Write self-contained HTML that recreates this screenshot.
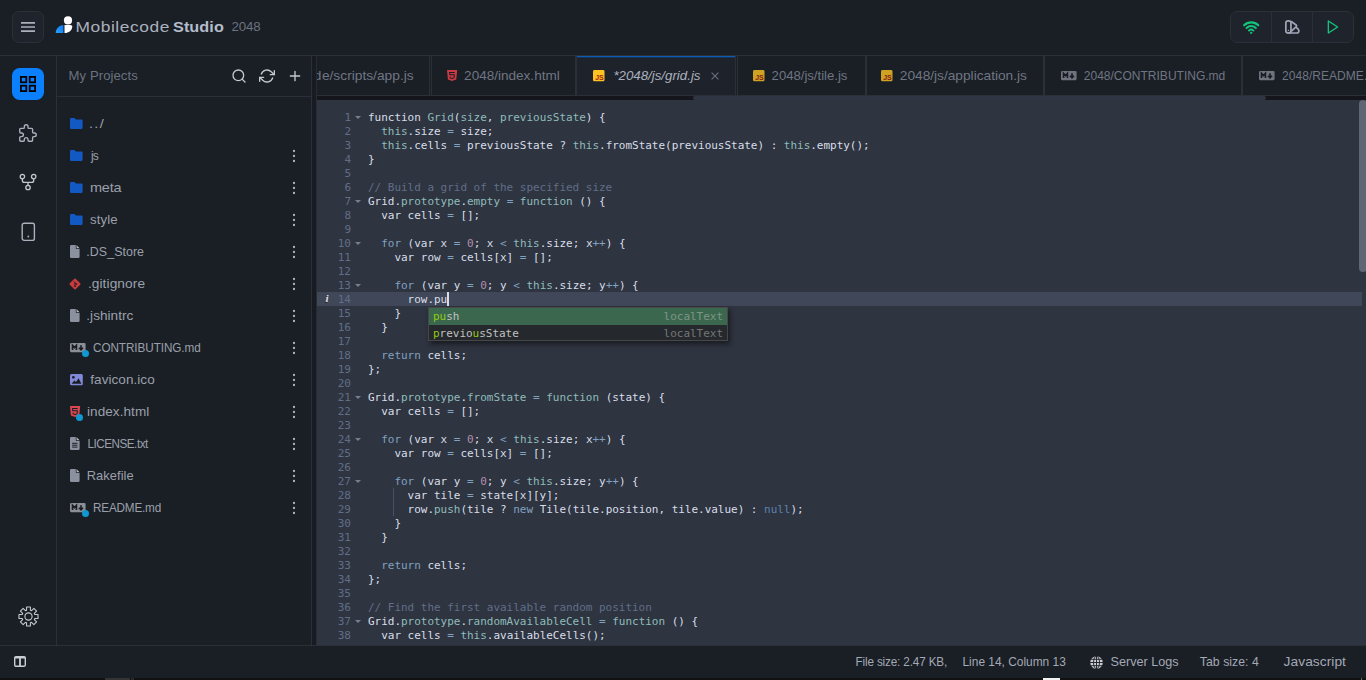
<!DOCTYPE html>
<html lang="en"><head><meta charset="utf-8"><title>Mobilecode Studio</title>
<style>
*{box-sizing:border-box;margin:0;padding:0}
html,body{width:1366px;height:680px;overflow:hidden;background:#1a1e25}
body{position:relative;font-family:"Liberation Sans",sans-serif;font-size:13px;color:#9ca3af}
.abs,.ic,.tx,.tt,.dot{position:absolute}
#hdr span,#mp,.tx,.tt,#st span{transform-origin:0 0}
#tb0p{transform-origin:100% 0;transform:scaleX(1.05)}
.ic{display:block;overflow:visible}
.fe{fill:none;stroke:#c3c8d2;stroke-width:2;stroke-linecap:round;stroke-linejoin:round}
#hdr{left:0;top:0;width:1366px;height:56px;border-bottom:1px solid #2b2f38}
#menu{left:12px;top:11px;width:32px;height:32px;border:1px solid #2b2f38;border-radius:7px;background:#1f232b}
#h1,#h2{top:14.800px;font-size:15.500px;line-height:24px;color:#aab1be;white-space:nowrap}
#h2{font-weight:bold;color:#b4bccb}
#h3{top:17px;font-size:13px;line-height:20px;color:#6b7280}
#grp{left:1230px;top:11px;width:124px;height:32px;border:1px solid #2b2f38;border-radius:7px;background:#1f232b}
#grp i{position:absolute;top:0;width:1px;height:30px;background:#2b2f38}
#rail{left:0;top:56px;width:57px;height:589px;border-right:1px solid #2b2f38}
#act{left:12px;top:12px;width:32px;height:32px;border-radius:8px;background:#0a80ff}
#side{left:57px;top:56px;width:255px;height:589px;border-right:1px solid #2b2f38}
#sh{left:0;top:0;width:254px;height:41px;border-bottom:1px solid #2b2f38}
#mp{left:12px;top:10px;line-height:20px;color:#6b7280;white-space:nowrap}
.tx{line-height:20px;white-space:nowrap;color:#9aa0ab}
.dot{width:7px;height:7px;border-radius:50%;background:#1198d2}
#split{left:312px;top:56px;width:5px;height:589px;background:#181b21;border-right:1px solid #272b34}
#tabs{left:317px;top:56px;width:1049px;height:40px;overflow:hidden;border-bottom:1px solid #2b2f38}
.tab{position:absolute;top:0;height:39px;border-left:1px solid #2b2f38;border-right:1px solid #2b2f38}
.tab.on{background:linear-gradient(#0d5cb6,#0d5cb6 1px,rgba(13,92,182,.35) 1px,rgba(13,92,182,.35) 2px,#1e222a 2px)}
.tt{top:10px;line-height:20px;white-space:nowrap;color:#6f7683}
.tab.on .tt{font-style:italic;color:#aab1be}
#tsb{left:317px;top:96px;width:1049px;height:4px;background:#14161b}
#tsb i{position:absolute;left:376px;top:0;width:573px;height:4px;border-radius:2px;background:#2f3542}
#ed{left:317px;top:100px;width:1049px;height:545px;background:#2e3440;overflow:hidden;font-family:"DejaVu Sans Mono","Liberation Mono",monospace;font-size:11px;color:#d8dee9}
.ln{position:absolute;left:0;width:1045px;height:14px;line-height:14px;white-space:pre}
.ln.act{background:#3f4758}
.num{position:absolute;top:1px;left:0;width:34px;text-align:right;color:#616e88}
.src{position:absolute;top:1px;left:51px;letter-spacing:-0.0226px}
.src b{font-weight:normal}
.t{color:#8fbcbb}.k{color:#81a1c1}.n{color:#b48ead}.c{color:#616e88}.l{color:#5e81ac}
.fold{position:absolute;left:37.600px;top:5.500px;width:0;height:0;border-left:3px solid transparent;border-right:3px solid transparent;border-top:3.200px solid #767e8e}
.info{position:absolute;left:8.500px;top:-1px;font-family:"Liberation Serif",serif;font-style:italic;font-weight:bold;font-size:11px;color:#e4e6ea;text-shadow:-.5px .5px 0 #222}
#guide{left:76px;top:388px;width:1px;height:28px;background:#475063}
#cur{left:130.400px;top:192px;width:1.500px;height:14px;background:#d8dee9}
#pop{left:111px;top:207px;width:300px;height:34px;border:1px solid #484747;background:#25282c;box-shadow:2px 3px 5px rgba(0,0,0,.51);color:#c1c1c1}
#pop div{position:relative;height:17px;line-height:17px;padding:0 4px;white-space:pre;letter-spacing:-0.0226px}
#pop div+div{height:15px;line-height:17px;padding-top:0}
#pop div.sel{background:#3a674e}
#pop em{font-style:normal;color:#93ca12}
#pop span{position:absolute;right:4px;top:0;opacity:.5}
#vsb{left:1042px;top:0;width:8px;height:172px;border-radius:4px;background:#5f6574}
#st{left:0;top:645px;width:1366px;height:33px;border-top:1px solid #2b2f38}
#st span{position:absolute;top:6px;line-height:20px;white-space:nowrap;color:#a3a9b5}
#blk{left:0;top:678px;width:1366px;height:2px;background:#111}
#h1{transform:translateX(-0.6px) scaleX(1.12);letter-spacing:0.52px}
#h2{transform:translateX(0px) scaleX(1.0479);letter-spacing:0.057px}
#h3{transform:translateX(-0.4px) scaleX(1.0214);letter-spacing:-0.131px}
#mp{transform:translateX(-0.4px) scaleX(1.009);letter-spacing:0.059px}
#s1{transform:translateX(-0.5px) scaleX(0.9);letter-spacing:-0.16px}
#s2{transform:translateX(-0.5px) scaleX(0.9179);letter-spacing:-0.013px}
#s3{transform:translateX(-0.4px) scaleX(0.97);letter-spacing:-0.01px}
#s4{transform:translateX(-0.2px) scaleX(0.9429);letter-spacing:0.042px}
#s5{transform:translateX(-0.4px) scaleX(1.0576);letter-spacing:0.042px}
#t0{transform:translateX(-1px) scaleX(1.12);letter-spacing:1.161px}
#t1{transform:translateX(1px) scaleX(0.92);letter-spacing:-0.87px}
#t2{transform:translateX(0px) scaleX(1.1138);letter-spacing:-0.209px}
#t3{transform:translateX(0px) scaleX(1.0148);letter-spacing:0.099px}
#t4{transform:translateX(-0.7px) scaleX(0.9559);letter-spacing:0.052px}
#t5{transform:translateX(-0.1px) scaleX(1.0528);letter-spacing:0.084px}
#t6{transform:translateX(-0.7px) scaleX(1.0477);letter-spacing:0.012px}
#t7{transform:translateX(0px) scaleX(0.9);letter-spacing:-0.063px}
#t8{transform:translateX(0.3px) scaleX(1.0403);letter-spacing:0.048px}
#t9{transform:translateX(0px) scaleX(1.0424);letter-spacing:0.053px}
#t10{transform:translateX(0.4px) scaleX(0.9);letter-spacing:-0.533px}
#t11{transform:translateX(-0.3px) scaleX(0.9891);letter-spacing:0.072px}
#t12{transform:translateX(0px) scaleX(0.9);letter-spacing:-0.195px}
#tb0{transform:translateX(-0.1px) scaleX(1.0581);letter-spacing:0.0px}
#tb1{transform:translateX(0.1px) scaleX(1.0429);letter-spacing:-0.007px}
#tb2{transform:translateX(0.4px) scaleX(1.0224);letter-spacing:-0.007px}
#tb3{transform:translateX(-0.4px) scaleX(1.0107);letter-spacing:-0.014px}
#tb4{transform:translateX(-0.2px) scaleX(1.0558);letter-spacing:-0.014px}
#tb5{transform:translateX(-0.2px) scaleX(0.9257);letter-spacing:-0.017px}
#tb6{transform:translateX(0px) scaleX(0.9236);letter-spacing:0.05px}
</style></head>
<body>
<div id="hdr" class="abs">
 <div id="menu" class="abs"><svg class="ic" style="left:8px;top:8.900px" width="14" height="12" viewBox="0 0 14 12"><path d="M0 1.800h14M0 6h14M0 10.200h14" stroke="#aab0bc" stroke-width="1.700"/></svg></div>
 <svg class="ic" style="left:55px;top:16px" width="18" height="18" viewBox="55 16 18 18"><defs><linearGradient id="lg" x1="0" y1="1" x2="1" y2="0"><stop offset="0" stop-color="#2aa2ff"/><stop offset="1" stop-color="#0a78f2"/></linearGradient></defs><circle cx="68" cy="20.400" r="4.100" fill="#fff"/><path d="M64.500 24.900H70.600Q72.250 24.900 72.250 26.600C72.250 30.600 68.800 33.100 64.500 33.100z" fill="#fff"/><path d="M63.350 24.900V33.100H55.700C55.700 28.600 59.100 24.900 63.350 24.900z" fill="url(#lg)"/></svg>
 <span id="h1" class="abs" style="left:76.400px">Mobilecode</span><span id="h2" class="abs" style="left:173px">Studio</span><span id="h3" class="abs" style="left:231.600px">2048</span>
 <div id="grp" class="abs"><i style="left:40px"></i><i style="left:81px"></i>
  <svg class="ic" style="left:11.800px;top:9px" width="16.400" height="13" preserveAspectRatio="none" viewBox="0 0 18 14"><g fill="none" stroke="#14c47d" stroke-linecap="round"><path d="M1.200 4.700a11 11 0 0 1 15.600 0" stroke-width="2.300"/><path d="M3.900 7.600a7.200 7.200 0 0 1 10.200 0" stroke-width="2.200"/><path d="M6.500 10.300a3.600 3.600 0 0 1 5 0" stroke-width="2"/></g><circle cx="9" cy="12.700" r="1.250" fill="#14c47d"/></svg>
  <svg class="ic" style="left:53px;top:7px" width="16" height="16" viewBox="1284 19 16 16"><g fill="none" stroke="#a0a6b8" stroke-width="1.700" stroke-linejoin="round" stroke-linecap="round"><rect x="1285.850" y="20.800" width="5.100" height="12.200" rx="2.300"/><path d="M1291.700 21.700L1296.100 25Q1297 25.800 1296.200 26.600L1291.700 30.900"/><path d="M1296.600 27.700Q1298.900 29 1298.900 31Q1298.800 33 1296.800 33L1288.400 33"/></g><circle cx="1288.400" cy="30.400" r=".7" fill="#a0a6b8"/></svg>
  <svg class="ic" style="left:94px;top:7px" width="16" height="16" viewBox="0 0 24 24"><path d="M5 3l14 9-14 9z" fill="none" stroke="#14c47d" stroke-width="2" stroke-linejoin="round"/></svg>
 </div>
</div>
<div id="rail" class="abs">
 <div id="act" class="abs"><svg class="ic" style="left:8px;top:8px" width="16" height="16" viewBox="0 0 16 16"><g fill="none" stroke="#000" stroke-width="1.800"><rect x=".9" y=".9" width="5.400" height="5.400"/><rect x="9.700" y=".9" width="5.400" height="5.400"/><rect x=".9" y="9.700" width="5.400" height="5.400"/><rect x="9.700" y="9.700" width="5.400" height="5.400"/></g></svg></div>
 <svg class="ic" style="left:17px;top:66px" width="22" height="22" viewBox="0 0 24 24"><path d="M4 7h3a1 1 0 0 0 1-1V5a2 2 0 0 1 4 0v1a1 1 0 0 0 1 1h3a1 1 0 0 1 1 1v3a1 1 0 0 0 1 1h1a2 2 0 0 1 0 4h-1a1 1 0 0 0-1 1v3a1 1 0 0 1-1 1h-3a1 1 0 0 1-1-1v-1a2 2 0 0 0-4 0v1a1 1 0 0 1-1 1H4a1 1 0 0 1-1-1v-3a1 1 0 0 1 1-1h1a2 2 0 0 0 0-4H4a1 1 0 0 1-1-1V8a1 1 0 0 1 1-1" fill="none" stroke="#aab0bd" stroke-width="1.500" stroke-linejoin="round"/></svg>
 <svg class="ic" style="left:19px;top:117px" width="18" height="18" viewBox="0 0 18 18"><g fill="none" stroke="#c3c8d2" stroke-width="1.300"><circle cx="3.400" cy="3.600" r="2.200"/><circle cx="14.700" cy="3.600" r="2.200"/><circle cx="9" cy="14.500" r="2.200"/><path d="M3.400 5.800v1.600a2 2 0 0 0 2 2h7.300a2 2 0 0 0 2-2V5.800M9 9.400v2.900"/></g></svg>
 <svg class="ic" style="left:21px;top:165.500px" width="15" height="20" viewBox="0 0 15 20"><rect x="1.200" y="1.200" width="12.200" height="17.200" rx="2" fill="none" stroke="#aab0bd" stroke-width="1.400"/><circle cx="7.300" cy="14.500" r=".9" fill="#aab0bd"/></svg>
 <svg class="ic" style="left:17.800px;top:549.500px" width="21" height="21" viewBox="-10.500 -10.500 21 21"><g fill="none" stroke="#c3c8d2" stroke-width="1.100" stroke-linejoin="round"><path d="M-1.95 -6.31 L-1.93 -9.51 L1.93 -9.51 L1.95 -6.31 L3.08 -5.84 L5.36 -8.08 L8.08 -5.36 L5.84 -3.08 L6.31 -1.95 L9.51 -1.93 L9.51 1.93 L6.31 1.95 L5.84 3.08 L8.08 5.36 L5.36 8.08 L3.08 5.84 L1.95 6.31 L1.93 9.51 L-1.93 9.51 L-1.95 6.31 L-3.08 5.84 L-5.36 8.08 L-8.08 5.36 L-5.84 3.08 L-6.31 1.95 L-9.51 1.93 L-9.51 -1.93 L-6.31 -1.95 L-5.84 -3.08 L-8.08 -5.36 L-5.36 -8.08 L-3.08 -5.84Z"/><circle r="3.600"/></g></svg>
</div>
<div id="side" class="abs">
 <div id="sh" class="abs"><span id="mp" class="abs">My Projects</span>
  <svg class="ic fe" style="left:174px;top:12px" width="16" height="16" viewBox="0 0 24 24"><circle cx="11" cy="11" r="8"/><path d="M21 21l-4.350-4.350"/></svg>
  <svg class="ic fe" style="left:202px;top:12px" width="16" height="16" viewBox="0 0 24 24"><path d="M23 4v6h-6M1 20v-6h6"/><path d="M3.510 9a9 9 0 0 1 14.850-3.360L23 10M1 14l4.640 4.360A9 9 0 0 0 20.490 15"/></svg>
  <svg class="ic fe" style="left:230px;top:12px" width="16" height="16" viewBox="0 0 24 24"><path d="M12 5v14M5 12h14"/></svg>
 </div>
<div class="row"><svg class="ic" style="left:12.5px;top:61.5px" width="12.600" height="11" preserveAspectRatio="none" viewBox="0 0 13 11"><path d="M1.2 0h3.6l1.4 1.5h5.6A1.2 1.2 0 0 1 13 2.7v7.1A1.2 1.2 0 0 1 11.8 11H1.2A1.2 1.2 0 0 1 0 9.8V1.2A1.2 1.2 0 0 1 1.2 0z" fill="#1259c3"/></svg><span id="t0" class="tx" style="left:33px;top:58px">../</span></div>
<div class="row"><svg class="ic" style="left:12.5px;top:93.5px" width="12.600" height="11" preserveAspectRatio="none" viewBox="0 0 13 11"><path d="M1.2 0h3.6l1.4 1.5h5.6A1.2 1.2 0 0 1 13 2.7v7.1A1.2 1.2 0 0 1 11.8 11H1.2A1.2 1.2 0 0 1 0 9.8V1.2A1.2 1.2 0 0 1 1.2 0z" fill="#1259c3"/></svg><span id="t1" class="tx" style="left:33px;top:90px">js</span><svg class="ic" style="left:235px;top:93px" width="4" height="14" viewBox="0 0 4 14"><circle cx="2" cy="2" r="1.150" fill="#aeb3bf"/><circle cx="2" cy="7" r="1.150" fill="#aeb3bf"/><circle cx="2" cy="12" r="1.150" fill="#aeb3bf"/></svg></div>
<div class="row"><svg class="ic" style="left:12.5px;top:125.5px" width="12.600" height="11" preserveAspectRatio="none" viewBox="0 0 13 11"><path d="M1.2 0h3.6l1.4 1.5h5.6A1.2 1.2 0 0 1 13 2.7v7.1A1.2 1.2 0 0 1 11.8 11H1.2A1.2 1.2 0 0 1 0 9.8V1.2A1.2 1.2 0 0 1 1.2 0z" fill="#1259c3"/></svg><span id="t2" class="tx" style="left:33px;top:122px">meta</span><svg class="ic" style="left:235px;top:125px" width="4" height="14" viewBox="0 0 4 14"><circle cx="2" cy="2" r="1.150" fill="#aeb3bf"/><circle cx="2" cy="7" r="1.150" fill="#aeb3bf"/><circle cx="2" cy="12" r="1.150" fill="#aeb3bf"/></svg></div>
<div class="row"><svg class="ic" style="left:12.5px;top:157.5px" width="12.600" height="11" preserveAspectRatio="none" viewBox="0 0 13 11"><path d="M1.2 0h3.6l1.4 1.5h5.6A1.2 1.2 0 0 1 13 2.7v7.1A1.2 1.2 0 0 1 11.8 11H1.2A1.2 1.2 0 0 1 0 9.8V1.2A1.2 1.2 0 0 1 1.2 0z" fill="#1259c3"/></svg><span id="t3" class="tx" style="left:33px;top:154px">style</span><svg class="ic" style="left:235px;top:157px" width="4" height="14" viewBox="0 0 4 14"><circle cx="2" cy="2" r="1.150" fill="#aeb3bf"/><circle cx="2" cy="7" r="1.150" fill="#aeb3bf"/><circle cx="2" cy="12" r="1.150" fill="#aeb3bf"/></svg></div>
<div class="row"><svg class="ic" style="left:12.5px;top:188.8px" width="9.600" height="13" preserveAspectRatio="none" viewBox="0 0 10 13"><path d="M1.3 0H6v3a1 1 0 0 0 1 1h3v7.7A1.3 1.3 0 0 1 8.7 13H1.3A1.3 1.3 0 0 1 0 11.700V1.3A1.300 1.3 0 0 1 1.300 0z" fill="#8b919e"/><path d="M6.800 0l3.200 3.200H7.300a.5.5 0 0 1-.5-.5z" fill="#aeb3be"/></svg><span id="t4" class="tx" style="left:29.5px;top:186px">.DS_Store</span><svg class="ic" style="left:235px;top:189px" width="4" height="14" viewBox="0 0 4 14"><circle cx="2" cy="2" r="1.150" fill="#aeb3bf"/><circle cx="2" cy="7" r="1.150" fill="#aeb3bf"/><circle cx="2" cy="12" r="1.150" fill="#aeb3bf"/></svg></div>
<div class="row"><svg class="ic" style="left:12.05px;top:221.5px" width="12" height="12" viewBox="0 0 12 12"><rect x="1.850" y="1.850" width="8.300" height="8.300" rx=".9" transform="rotate(45 6 6)" fill="#c93c3c"/><path d="M4.700 3.500l2.500 2.500M6 4.800v3.700" stroke="#1a1d24" stroke-width=".9" fill="none"/><circle cx="6" cy="8.300" r=".8" fill="#1a1d24"/><circle cx="7.300" cy="6.100" r=".8" fill="#1a1d24"/></svg><span id="t5" class="tx" style="left:31.299999999999997px;top:218px">.gitignore</span><svg class="ic" style="left:235px;top:221px" width="4" height="14" viewBox="0 0 4 14"><circle cx="2" cy="2" r="1.150" fill="#aeb3bf"/><circle cx="2" cy="7" r="1.150" fill="#aeb3bf"/><circle cx="2" cy="12" r="1.150" fill="#aeb3bf"/></svg></div>
<div class="row"><svg class="ic" style="left:12.5px;top:252.8px" width="9.600" height="13" preserveAspectRatio="none" viewBox="0 0 10 13"><path d="M1.3 0H6v3a1 1 0 0 0 1 1h3v7.7A1.3 1.3 0 0 1 8.7 13H1.3A1.3 1.3 0 0 1 0 11.700V1.3A1.300 1.3 0 0 1 1.300 0z" fill="#8b919e"/><path d="M6.800 0l3.200 3.200H7.300a.5.5 0 0 1-.5-.5z" fill="#aeb3be"/></svg><span id="t6" class="tx" style="left:29.5px;top:250px">.jshintrc</span><svg class="ic" style="left:235px;top:253px" width="4" height="14" viewBox="0 0 4 14"><circle cx="2" cy="2" r="1.150" fill="#aeb3bf"/><circle cx="2" cy="7" r="1.150" fill="#aeb3bf"/><circle cx="2" cy="12" r="1.150" fill="#aeb3bf"/></svg></div>
<div class="row"><svg class="ic" style="left:12.5px;top:286.8px" width="15.600" height="9.200" preserveAspectRatio="none" viewBox="0 0 16 10"><rect width="16" height="10" rx="1.200" fill="#8a8e97"/><path d="M2.600 7.600V2.600l2 2.400 2-2.400v5M11.300 2.400v4.400M9.300 5.200l2 2.300 2-2.300" stroke="#1a1d24" stroke-width="1.700" fill="none"/></svg><i class="dot" style="left:24.900000000000006px;top:294.1px"></i><span id="t7" class="tx" style="left:36px;top:282px">CONTRIBUTING.md</span><svg class="ic" style="left:235px;top:285px" width="4" height="14" viewBox="0 0 4 14"><circle cx="2" cy="2" r="1.150" fill="#aeb3bf"/><circle cx="2" cy="7" r="1.150" fill="#aeb3bf"/><circle cx="2" cy="12" r="1.150" fill="#aeb3bf"/></svg></div>
<div class="row"><svg class="ic" style="left:12.5px;top:318px" width="12.800" height="11.200" preserveAspectRatio="none" viewBox="0 0 13 11"><rect width="13" height="11" rx="1.500" fill="#8288d8"/><circle cx="3.400" cy="3.300" r="1.300" fill="#1a1d24"/><path d="M1.500 9.500l3-3.200 1.600 1.500 2.600-3.600 2.900 5.300z" fill="#1a1d24"/></svg><span id="t8" class="tx" style="left:33.3px;top:314px">favicon.ico</span><svg class="ic" style="left:235px;top:317px" width="4" height="14" viewBox="0 0 4 14"><circle cx="2" cy="2" r="1.150" fill="#aeb3bf"/><circle cx="2" cy="7" r="1.150" fill="#aeb3bf"/><circle cx="2" cy="12" r="1.150" fill="#aeb3bf"/></svg></div>
<div class="row"><svg class="ic" style="left:12.5px;top:349.6px" width="10.200" height="11.100" preserveAspectRatio="none" viewBox="0 0 11 12"><path d="M0 0h11l-1 10.400L5.500 12 1 10.400z" fill="#d94850"/><path d="M8.300 2.600H2.800l.2 2.600h4.900l-.3 3.300-2.100.7-2.100-.7-.1-1.300" stroke="#1a1d24" stroke-width="1.100" fill="none"/></svg><i class="dot" style="left:18.799999999999997px;top:358.1px"></i><span id="t9" class="tx" style="left:30px;top:346px">index.html</span><svg class="ic" style="left:235px;top:349px" width="4" height="14" viewBox="0 0 4 14"><circle cx="2" cy="2" r="1.150" fill="#aeb3bf"/><circle cx="2" cy="7" r="1.150" fill="#aeb3bf"/><circle cx="2" cy="12" r="1.150" fill="#aeb3bf"/></svg></div>
<div class="row"><svg class="ic" style="left:12.5px;top:380.8px" width="9.600" height="13" preserveAspectRatio="none" viewBox="0 0 10 13"><path d="M1.3 0H6v3a1 1 0 0 0 1 1h3v7.7A1.3 1.3 0 0 1 8.7 13H1.3A1.3 1.3 0 0 1 0 11.700V1.3A1.300 1.3 0 0 1 1.300 0z" fill="#8b919e"/><path d="M6.800 0l3.200 3.200H7.300a.5.5 0 0 1-.5-.5z" fill="#aeb3be"/><path d="M2.200 6.300h5.600M2.200 8.200h5.600M2.200 10.100h5.600" stroke="#1a1d24" stroke-width="1"/></svg><span id="t10" class="tx" style="left:30px;top:378px">LICENSE.txt</span><svg class="ic" style="left:235px;top:381px" width="4" height="14" viewBox="0 0 4 14"><circle cx="2" cy="2" r="1.150" fill="#aeb3bf"/><circle cx="2" cy="7" r="1.150" fill="#aeb3bf"/><circle cx="2" cy="12" r="1.150" fill="#aeb3bf"/></svg></div>
<div class="row"><svg class="ic" style="left:12.5px;top:412.8px" width="9.600" height="13" preserveAspectRatio="none" viewBox="0 0 10 13"><path d="M1.3 0H6v3a1 1 0 0 0 1 1h3v7.7A1.3 1.3 0 0 1 8.7 13H1.3A1.3 1.3 0 0 1 0 11.700V1.3A1.300 1.3 0 0 1 1.300 0z" fill="#8b919e"/><path d="M6.800 0l3.200 3.200H7.300a.5.5 0 0 1-.5-.5z" fill="#aeb3be"/></svg><span id="t11" class="tx" style="left:30px;top:410px">Rakefile</span><svg class="ic" style="left:235px;top:413px" width="4" height="14" viewBox="0 0 4 14"><circle cx="2" cy="2" r="1.150" fill="#aeb3bf"/><circle cx="2" cy="7" r="1.150" fill="#aeb3bf"/><circle cx="2" cy="12" r="1.150" fill="#aeb3bf"/></svg></div>
<div class="row"><svg class="ic" style="left:12.5px;top:446.8px" width="15.600" height="9.200" preserveAspectRatio="none" viewBox="0 0 16 10"><rect width="16" height="10" rx="1.200" fill="#8a8e97"/><path d="M2.600 7.600V2.600l2 2.400 2-2.400v5M11.300 2.400v4.400M9.300 5.200l2 2.300 2-2.300" stroke="#1a1d24" stroke-width="1.700" fill="none"/></svg><i class="dot" style="left:24.900000000000006px;top:454.1px"></i><span id="t12" class="tx" style="left:36px;top:442px">README.md</span><svg class="ic" style="left:235px;top:445px" width="4" height="14" viewBox="0 0 4 14"><circle cx="2" cy="2" r="1.150" fill="#aeb3bf"/><circle cx="2" cy="7" r="1.150" fill="#aeb3bf"/><circle cx="2" cy="12" r="1.150" fill="#aeb3bf"/></svg></div>
</div>
<div id="split" class="abs"></div>
<div id="tabs" class="abs">
<div class="tab" style="left:-67px;width:180px"><span class="tt" id="tb0p" style="right:107.60000000000002px">mobilecod</span><span id="tb0" class="tt" style="left:70.89999999999998px">e/scripts/app.js</span></div>
<div class="tab" style="left:114px;width:145px"><svg class="ic" style="left:14.899999999999977px;top:14px" width="10.200" height="11.100" preserveAspectRatio="none" viewBox="0 0 11 12"><path d="M0 0h11l-1 10.400L5.500 12 1 10.400z" fill="#cb3b44"/><path d="M8.300 2.600H2.800l.2 2.600h4.900l-.3 3.300-2.100.7-2.100-.7-.1-1.300" stroke="#1a1d24" stroke-width="1.100" fill="none"/></svg><span id="tb1" class="tt" style="left:32.10000000000002px">2048/index.html</span></div>
<div class="tab on" style="left:259px;width:160px"><svg class="ic" style="left:16.399999999999977px;top:14px;opacity:1" width="11.500" height="11.300" viewBox="0 0 11.500 11.300"><rect width="11.500" height="11.300" rx="1.400" fill="#fcc322"/><text x="10.700" y="9.800" font-family="Liberation Sans,sans-serif" font-size="7" font-weight="bold" text-anchor="end" fill="#a3221a">JS</text></svg><span id="tb2" class="tt" style="left:36.39999999999998px">*2048/js/grid.js</span><svg class="ic" style="left:134.300px;top:16px" width="8" height="8" viewBox="0 0 8 8"><path d="M.6.600l6.800 6.800M7.400.600L.6 7.400" stroke="#666d7a" stroke-width="1.150"/></svg></div>
<div class="tab" style="left:420px;width:129px"><svg class="ic" style="left:15px;top:14px;opacity:0.8" width="11.500" height="11.300" viewBox="0 0 11.500 11.300"><rect width="11.500" height="11.300" rx="1.400" fill="#fcc322"/><text x="10.700" y="9.800" font-family="Liberation Sans,sans-serif" font-size="7" font-weight="bold" text-anchor="end" fill="#a3221a">JS</text></svg><span id="tb3" class="tt" style="left:33.60000000000002px">2048/js/tile.js</span></div>
<div class="tab" style="left:549px;width:178px"><svg class="ic" style="left:14.200000000000045px;top:14px;opacity:0.8" width="11.500" height="11.300" viewBox="0 0 11.500 11.300"><rect width="11.500" height="11.300" rx="1.400" fill="#fcc322"/><text x="10.700" y="9.800" font-family="Liberation Sans,sans-serif" font-size="7" font-weight="bold" text-anchor="end" fill="#a3221a">JS</text></svg><span id="tb4" class="tt" style="left:32.799999999999955px">2048/js/application.js</span></div>
<div class="tab" style="left:727px;width:198px"><svg class="ic" style="left:15.900000000000091px;top:15px" width="15.600" height="9.200" preserveAspectRatio="none" viewBox="0 0 16 10"><rect width="16" height="10" rx="1.200" fill="#6f747e"/><path d="M2.600 7.600V2.600l2 2.400 2-2.400v5M11.300 2.400v4.400M9.300 5.200l2 2.300 2-2.300" stroke="#1a1d24" stroke-width="1.700" fill="none"/></svg><span id="tb5" class="tt" style="left:38.799999999999955px">2048/CONTRIBUTING.md</span></div>
<div class="tab" style="left:925px;width:150px"><svg class="ic" style="left:15.799999999999955px;top:15px" width="15.600" height="9.200" preserveAspectRatio="none" viewBox="0 0 16 10"><rect width="16" height="10" rx="1.200" fill="#6f747e"/><path d="M2.600 7.600V2.600l2 2.400 2-2.400v5M11.300 2.400v4.400M9.300 5.200l2 2.300 2-2.300" stroke="#1a1d24" stroke-width="1.700" fill="none"/></svg><span id="tb6" class="tt" style="left:39px">2048/README.md</span></div>
</div>
<div id="tsb" class="abs"><i></i></div>
<div id="ed" class="abs">
<div class="ln" style="top:10px"><span class="num">1</span><i class="fold"></i><span class="src">function <b class="t">Grid</b>(<b class="t">size</b>, <b class="t">previousState</b>) {</span></div>
<div class="ln" style="top:24px"><span class="num">2</span><span class="src">  <b class="t">this</b>.size <b class="k">=</b> size;</span></div>
<div class="ln" style="top:38px"><span class="num">3</span><span class="src">  <b class="t">this</b>.cells <b class="k">=</b> previousState ? <b class="t">this</b>.fromState(previousState) : <b class="t">this</b>.empty();</span></div>
<div class="ln" style="top:52px"><span class="num">4</span><span class="src">}</span></div>
<div class="ln" style="top:66px"><span class="num">5</span><span class="src"></span></div>
<div class="ln" style="top:80px"><span class="num">6</span><span class="src"><b class="c">// Build a grid of the specified size</b></span></div>
<div class="ln" style="top:94px"><span class="num">7</span><i class="fold"></i><span class="src">Grid.<b class="t">prototype</b>.<b class="t">empty</b> <b class="k">=</b> <b class="t">function</b> () {</span></div>
<div class="ln" style="top:108px"><span class="num">8</span><span class="src">  var cells <b class="k">=</b> [];</span></div>
<div class="ln" style="top:122px"><span class="num">9</span><span class="src"></span></div>
<div class="ln" style="top:136px"><span class="num">10</span><i class="fold"></i><span class="src">  <b class="k">for</b> (var x <b class="k">=</b> <b class="n">0</b>; x <b class="k">&lt;</b> <b class="t">this</b>.size; x<b class="k">++</b>) {</span></div>
<div class="ln" style="top:150px"><span class="num">11</span><span class="src">    var row <b class="k">=</b> cells[x] <b class="k">=</b> [];</span></div>
<div class="ln" style="top:164px"><span class="num">12</span><span class="src"></span></div>
<div class="ln" style="top:178px"><span class="num">13</span><i class="fold"></i><span class="src">    <b class="k">for</b> (var y <b class="k">=</b> <b class="n">0</b>; y <b class="k">&lt;</b> <b class="t">this</b>.size; y<b class="k">++</b>) {</span></div>
<div class="ln act" style="top:192px"><span class="num">14</span><span class="info">i</span><span class="src">      row.pu</span></div>
<div class="ln" style="top:206px"><span class="num">15</span><span class="src">    }</span></div>
<div class="ln" style="top:220px"><span class="num">16</span><span class="src">  }</span></div>
<div class="ln" style="top:234px"><span class="num">17</span><span class="src"></span></div>
<div class="ln" style="top:248px"><span class="num">18</span><span class="src">  <b class="k">return</b> cells;</span></div>
<div class="ln" style="top:262px"><span class="num">19</span><span class="src">};</span></div>
<div class="ln" style="top:276px"><span class="num">20</span><span class="src"></span></div>
<div class="ln" style="top:290px"><span class="num">21</span><i class="fold"></i><span class="src">Grid.<b class="t">prototype</b>.<b class="t">fromState</b> <b class="k">=</b> <b class="t">function</b> (state) {</span></div>
<div class="ln" style="top:304px"><span class="num">22</span><span class="src">  var cells <b class="k">=</b> [];</span></div>
<div class="ln" style="top:318px"><span class="num">23</span><span class="src"></span></div>
<div class="ln" style="top:332px"><span class="num">24</span><i class="fold"></i><span class="src">  <b class="k">for</b> (var x <b class="k">=</b> <b class="n">0</b>; x <b class="k">&lt;</b> <b class="t">this</b>.size; x<b class="k">++</b>) {</span></div>
<div class="ln" style="top:346px"><span class="num">25</span><span class="src">    var row <b class="k">=</b> cells[x] <b class="k">=</b> [];</span></div>
<div class="ln" style="top:360px"><span class="num">26</span><span class="src"></span></div>
<div class="ln" style="top:374px"><span class="num">27</span><i class="fold"></i><span class="src">    <b class="k">for</b> (var y <b class="k">=</b> <b class="n">0</b>; y <b class="k">&lt;</b> <b class="t">this</b>.size; y<b class="k">++</b>) {</span></div>
<div class="ln" style="top:388px"><span class="num">28</span><span class="src">      var tile <b class="k">=</b> state[x][y];</span></div>
<div class="ln" style="top:402px"><span class="num">29</span><span class="src">      row.<b class="t">push</b>(tile ? <b class="k">new</b> Tile(tile.position, tile.value) : <b class="l">null</b>);</span></div>
<div class="ln" style="top:416px"><span class="num">30</span><span class="src">    }</span></div>
<div class="ln" style="top:430px"><span class="num">31</span><span class="src">  }</span></div>
<div class="ln" style="top:444px"><span class="num">32</span><span class="src"></span></div>
<div class="ln" style="top:458px"><span class="num">33</span><span class="src">  <b class="k">return</b> cells;</span></div>
<div class="ln" style="top:472px"><span class="num">34</span><span class="src">};</span></div>
<div class="ln" style="top:486px"><span class="num">35</span><span class="src"></span></div>
<div class="ln" style="top:500px"><span class="num">36</span><span class="src"><b class="c">// Find the first available random position</b></span></div>
<div class="ln" style="top:514px"><span class="num">37</span><i class="fold"></i><span class="src">Grid.<b class="t">prototype</b>.<b class="t">randomAvailableCell</b> <b class="k">=</b> <b class="t">function</b> () {</span></div>
<div class="ln" style="top:528px"><span class="num">38</span><span class="src">  var cells <b class="k">=</b> <b class="t">this</b>.availableCells();</span></div>
 <div id="guide" class="abs"></div>
 <div id="cur" class="abs"></div>
 <div id="pop" class="abs"><div class="sel"><em>pu</em>sh<span>localText</span></div><div><em>p</em>revio<em>u</em>sState<span>localText</span></div></div>
 <div id="vsb" class="abs"></div>
</div>
<div id="st" class="abs">
 <svg class="ic" style="left:14px;top:10.200px" width="12" height="11" viewBox="0 0 12 11"><rect x=".7" y=".7" width="10.600" height="9.600" rx="1.400" fill="none" stroke="#c9cdd6" stroke-width="1.400"/><path d="M.7 1.600h10.600M6 1v9" stroke="#c9cdd6" stroke-width="1.800"/></svg>
 <span id="s1" style="left:855.500px">File size: 2.47 KB,</span>
 <span id="s2" style="left:962.500px">Line 14, Column 13</span>
 <svg class="ic" style="left:1090px;top:10px" width="13" height="13" viewBox="0 0 13 13"><circle cx="6.500" cy="6.500" r="6.300" fill="#c9cdd6"/><path d="M6.500 0v13M0 6.500h13M.9 3.300h11.200M.9 9.700h11.200" stroke="#1a1d24" stroke-width=".9" fill="none"/><ellipse cx="6.500" cy="6.500" rx="3" ry="6.300" fill="none" stroke="#1a1d24" stroke-width=".9"/></svg>
 <span id="s3" style="left:1110.600px">Server Logs</span>
 <span id="s4" style="left:1199.800px">Tab size: 4</span>
 <span id="s5" style="left:1283.600px">Javascript</span>
</div>
<div id="blk" class="abs"><i class="abs" style="left:105px;top:0;width:25px;height:2px;background:#343434"></i><i class="abs" style="left:131px;top:0;width:3px;height:2px;background:#2a2a2a"></i><i class="abs" style="left:1043px;top:0;width:17px;height:2px;background:#f2f2f2"></i><i class="abs" style="left:1361px;top:0;width:1px;height:2px;background:#6a6a6a"></i></div>
</body></html>
